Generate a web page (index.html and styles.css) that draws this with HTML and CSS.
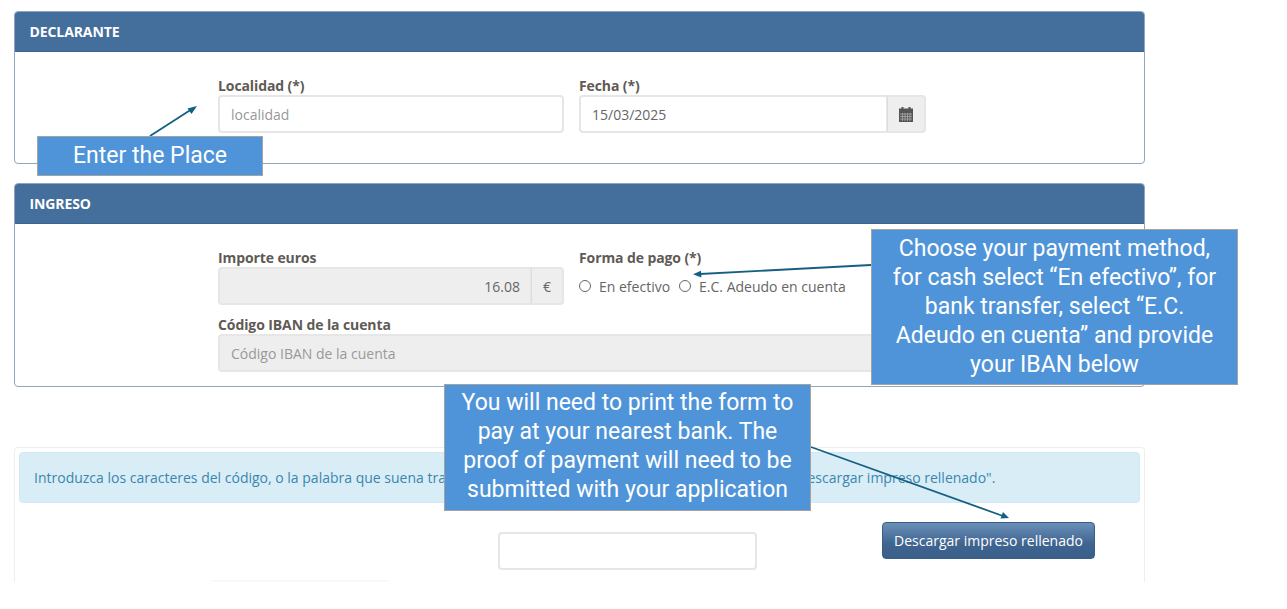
FILE: index.html
```html
<!DOCTYPE html>
<html lang="es">
<head>
<meta charset="utf-8">
<title>Declarante</title>
<link rel="stylesheet" href="styles.css">
</head>
<body>
<main class="page">
  <section class="panel panel-declarante">
    <h2 class="panel-head">DECLARANTE</h2>
    <div class="panel-body form-grid">
      <div class="field">
        <label class="label">Localidad (*)</label>
        <div class="input placeholder">localidad</div>
      </div>
      <div class="field">
        <label class="label">Fecha (*)</label>
        <div class="group">
          <div class="input join-right">15/03/2025</div>
          <div class="addon addon-cal">
            <svg class="cal" viewBox="0 0 14 15" width="14" height="15" aria-hidden="true">
              <rect x="2.5" y="0" width="2" height="3" fill="#555"/>
              <rect x="9.5" y="0" width="2" height="3" fill="#555"/>
              <rect x="0" y="1.5" width="14" height="3.5" fill="#555"/>
              <rect x="0" y="5" width="14" height="10" fill="#555"/>
              <path d="M1 7h12M1 9.5h12M1 12h12M3.5 6v8M6 6v8M8.500 6v8M11 6v8" stroke="#a9a9a9" stroke-width=".8" fill="none"/>
            </svg>
          </div>
        </div>
      </div>
    </div>
  </section>

  <section class="panel panel-ingreso">
    <h2 class="panel-head">INGRESO</h2>
    <div class="panel-body form-grid">
      <div class="field">
        <label class="label">Importe euros</label>
        <div class="group">
          <div class="input disabled join-right amount">16.08</div>
          <div class="addon addon-euro">€</div>
        </div>
      </div>
      <div class="field">
        <label class="label">Forma de pago (*)</label>
        <div class="radios">
          <label class="radio"><span class="dot"></span>En efectivo</label>
          <label class="radio"><span class="dot"></span>E.C. Adeudo en cuenta</label>
        </div>
      </div>
      <div class="field field-wide">
        <label class="label">Código IBAN de la cuenta</label>
        <div class="input disabled placeholder">Código IBAN de la cuenta</div>
      </div>
    </div>
  </section>

  <section class="panel-captcha">
    <div class="alert">Introduzca los caracteres del código, o la palabra que suena tras pulsar el botón de audio, y pulse a continuación en "Descargar impreso rellenado".</div>
    <div class="captcha-row">
      <div class="input captcha-input"></div>
      <button class="btn" type="button">Descargar impreso rellenado</button>
    </div>
    <div class="faint"></div>
  </section>
</main>

<svg class="arrows" width="1287" height="609" viewBox="0 0 1287 609" aria-hidden="true">
  <g stroke="#156082" stroke-width="1.8" fill="#156082">
    <line x1="150" y1="136" x2="192" y2="109"/>
    <path d="M197 106 L187.500 108.500 L191.500 114 Z" stroke="none"/>
    <line x1="871" y1="265" x2="700" y2="274"/>
    <path d="M693 274.300 L701 270.800 L701.400 277.600 Z" stroke="none"/>
    <line x1="811" y1="447" x2="1003" y2="516"/>
    <path d="M1009 518 L1000.500 518.500 L1003 512 Z" stroke="none"/>
  </g>
</svg>

<div class="callout callout-place">Enter the Place</div>
<div class="callout callout-pay">Choose your payment method,<br>for cash select “En efectivo”, for<br>bank transfer, select “E.C.<br>Adeudo en cuenta” and provide<br>your IBAN below</div>
<div class="callout callout-print">You will need to print the form to<br>pay at your nearest bank. The<br>proof of payment will need to be<br>submitted with your application</div>
</body>
</html>
```

FILE: styles.css
```css
* { box-sizing: border-box; }
html, body { margin: 0; padding: 0; background: #fff; }
body {
  width: 1287px;
  height: 609px;
  overflow: hidden;
  position: relative;
  font-family: "Open Sans", "Liberation Sans", sans-serif;
  font-size: 14px;
  color: #666;
}
.page { padding: 11px 142px 0 14px; }

.panel {
  border: 1px solid #8ea6c2;
  border-radius: 4px;
  margin-bottom: 19px;
  overflow: hidden;
}
.panel-ingreso { margin-bottom: 60px; height: 204px; }
.panel-declarante { height: 153px; }
.panel-head {
  height: 41px;
  margin: -1px -1px 0;
  padding: 0 16px 0 15.5px;
  background: #446e9b;
  border-bottom: 1px solid #3a6490;
  color: #fff;
  font-size: 14px;
  font-weight: 700;
  line-height: 42px;
  letter-spacing: -0.1px;
}
.panel-body { padding: 24px 0 0 203px; }
.form-grid {
  display: grid;
  grid-template-columns: 346px 347px;
  column-gap: 15px;
  row-gap: 10px;
  align-content: start;
}
.field-wide { grid-column: 1 / span 2; }
.label {
  display: block;
  height: 19px;
  font-size: 14px;
  font-weight: 700;
  line-height: 20px;
  color: #5f5a55;
  letter-spacing: -0.1px;
}
.input {
  height: 38px;
  padding: 0 10px 0 11px;
  border: 2px solid #e6e6e6;
  border-radius: 4px;
  background: #fff;
  font-size: 14px;
  line-height: 35px;
  color: #666;
  flex: 1;
}
.placeholder { color: #999; }
.disabled { background: #eee; }
.amount { text-align: right; }
.group { display: flex; }
.join-right { border-radius: 4px 0 0 4px; border-right-width: 1px; }
.addon {
  display: flex;
  align-items: center;
  justify-content: center;
  height: 38px;
  background: #eee;
  border: 2px solid #e6e6e6;
  border-left: 1px solid #ddd;
  border-radius: 0 4px 4px 0;
  color: #666;
  font-size: 14px;
}
.addon-cal { width: 39px; }
.addon-euro { width: 33px; }
.radios { display: flex; gap: 9px; height: 38px; align-items: center; }
.radio { display: flex; align-items: center; gap: 8px; font-size: 14px; color: #666; }
.dot {
  width: 12px;
  height: 12px;
  border: 1px solid #666;
  border-radius: 50%;
  background: #fff;
}

.panel-captcha {
  height: 135px;
  padding: 4px 4px 0;
  border: 1px solid #eee;
  border-bottom: 0;
  border-radius: 4px 4px 0 0;
  position: relative;
  overflow: hidden;
}
.alert {
  height: 51px;
  padding: 0 14px;
  background: #d9edf7;
  border: 1px solid #d0e9f5;
  border-radius: 4px;
  color: #3a87ad;
  font-size: 14px;
  line-height: 49px;
  white-space: nowrap;
  overflow: hidden;
}
.captcha-row {
  display: flex;
  align-items: flex-start;
  padding: 19px 0 0 479px;
  gap: 125px;
}
.captcha-input { flex: none; width: 259px; margin-top: 10px; }
.btn {
  width: 213px;
  height: 37px;
  padding: 0;
  border: 1px solid #3a5d85;
  border-radius: 4px;
  background: linear-gradient(#6a8fb8, #3f6490 60%, #3b5f8b);
  color: #fff;
  font-family: inherit;
  font-size: 14px;
}
.faint {
  position: absolute;
  left: 196px;
  bottom: 0;
  width: 178px;
  height: 2px;
  background: #f7f9fb;
}

.arrows { position: absolute; left: 0; top: 0; pointer-events: none; }
.callout {
  position: absolute;
  display: flex;
  align-items: center;
  justify-content: center;
  text-align: center;
  background: #4f94d9;
  border: 1px solid #a3a3a3;
  color: #fff;
  font-family: Roboto, "Liberation Sans", sans-serif;
  font-size: 23px;
  line-height: 29px;
}
.callout-place { left: 37px; top: 136px; width: 226px; height: 40px; padding-bottom: 2px; }
.callout-pay { left: 871px; top: 229px; width: 367px; height: 156px; padding-bottom: 2px; }
.callout-print { left: 444px; top: 384px; width: 367px; height: 127px; padding-bottom: 3px; }
```
